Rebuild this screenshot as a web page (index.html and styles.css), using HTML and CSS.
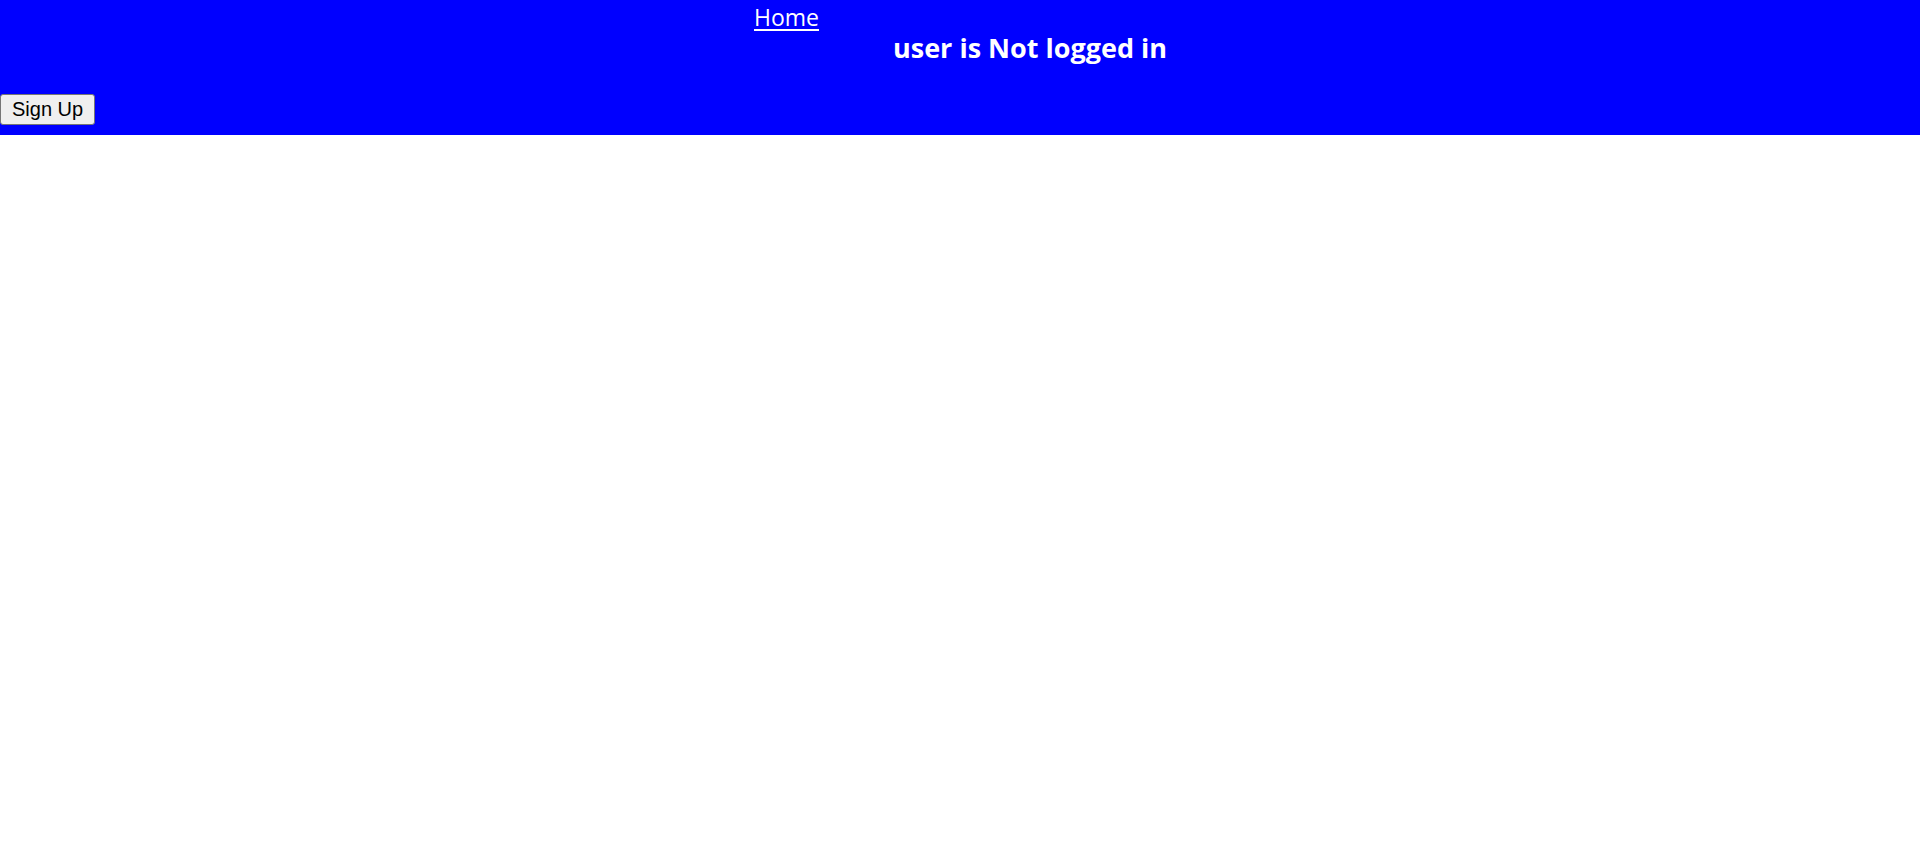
FILE: index.html
```html
<!DOCTYPE html>
<html lang="en">
<head>
<meta charset="utf-8">
<title>App</title>
<link rel="stylesheet" href="styles.css">
</head>
<body>
<header class="topbar">
  <nav class="nav">
    <a class="nav-link" href="#">Home</a>
  </nav>
  <h2 class="status">user is Not logged in</h2>
  <div class="actions">
    <button class="btn" type="button">Sign Up</button>
  </div>
</header>
</body>
</html>
```

FILE: styles.css
```css
html, body {
  margin: 0;
  padding: 0;
  background: #ffffff;
}

.topbar {
  background: #0000ff;
  height: 135px;
  display: flex;
  flex-direction: column;
  font-family: "Open Sans", "Noto Sans", sans-serif;
  color: #ffffff;
}

.nav {
  display: flex;
  padding-left: 754px;
  height: 34px;
}

.nav-link {
  color: #ffffff;
  font-size: 23px;
  line-height: 34px;
  text-decoration: underline;
  text-underline-offset: 3px;
  text-decoration-thickness: 2px;
}

.status {
  margin: 0;
  padding-left: 893px;
  font-size: 27px;
  font-weight: 700;
  line-height: 28px;
  height: 60px;
}

.actions {
  display: flex;
}

.btn {
  font-family: "Liberation Sans", Arial, sans-serif;
  font-size: 20px;
  color: #000000;
  background: #efefef;
  border: 1px solid #767676;
  border-radius: 3px;
  padding: 3px 11px;
  line-height: 23px;
  height: 31px;
}
```
